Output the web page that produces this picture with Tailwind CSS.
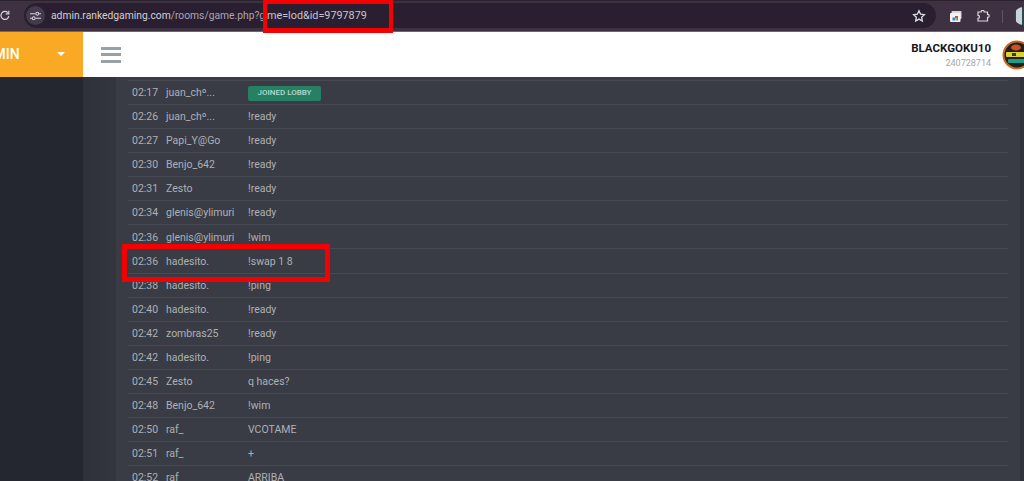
<!DOCTYPE html>
<html>
<head>
<meta charset="utf-8">
<script src="https://cdn.jsdelivr.net/npm/@tailwindcss/browser@4"></script>
</head>
<body class="w-[1024px] h-[481px] overflow-hidden relative bg-[#3a3d46] font-['Roboto',sans-serif]">
<!-- browser bar -->
<div class="h-[32px] bg-[#3e3142] border-t border-t-[#2b2230] border-b border-b-[#6a6570] flex items-center relative">
  <svg class="absolute left-[0px] top-[9px]" width="10" height="11" viewBox="0 0 10 11" fill="none" stroke="#d8d4dc" stroke-width="1.2"><path d="M7.8 2.6 A4 4 0 1 0 8.9 6.2"/><path d="M8.8 0.8 V3.8 H5.8"/></svg>
  <div class="absolute left-[24px] top-[2px] w-[912px] h-[25px] bg-[#2a1f30] rounded-full flex items-center">
    <div class="ml-[2px] w-[19px] h-[19px] rounded-full bg-[#443a4d] flex items-center justify-center">
      <svg width="11" height="10" viewBox="0 0 12 10" fill="none" stroke="#d8d4dc" stroke-width="1.1"><path d="M0 2.5H6M10 2.5H12M0 7.5H2M6 7.5H12"/><circle cx="8" cy="2.5" r="1.6"/><circle cx="4" cy="7.5" r="1.6"/></svg>
    </div>
    <span class="ml-[6px] text-[10.3px] text-[#d3cfd6] whitespace-nowrap">admin.rankedgaming.com<span class="text-[#aca5b1]">/rooms/game.php?g</span></span>
  </div>
  <svg class="absolute left-[912px] top-[8px]" width="14" height="14" viewBox="0 0 24 24" fill="none" stroke="#e0dde3" stroke-width="2.2"><path d="M12 3l2.8 5.9 6.4.8-4.7 4.4 1.2 6.4L12 17.3l-5.7 3.2 1.2-6.4L2.8 9.7l6.4-.8z"/></svg>
  <svg class="absolute left-[950px] top-[10px]" width="12" height="11" viewBox="0 0 12 11"><rect x="1.5" y="0" width="10" height="8" rx="1" fill="#d8d5da"/><rect x="0" y="2" width="10.5" height="9" rx="1" fill="#f4f2f5"/><path d="M2.5 6.5h2.5v3H2.5z" fill="#3a7fd9"/><path d="M5 5h3v2H5z" fill="#d9483b"/><path d="M5 7h1.5v2.5H5z" fill="#e8b93a"/><path d="M6.5 7H8v2.5H6.5z" fill="#3f9f5f"/></svg>
  <svg class="absolute left-[977px] top-[9px]" width="13" height="12" viewBox="0 0 13 12" fill="none" stroke="#dcd9df" stroke-width="1.2"><path d="M1 2H4.2V1.8a1.5 1.5 0 0 1 3 0V2H10.5V4.4h.2a1.5 1.5 0 0 1 0 3h-.2V11H1V8.4a1.5 1.5 0 0 0 0-3z"/></svg>
  <div class="absolute left-[1002px] top-[9px] w-px h-[13px] bg-[#5d5463]"></div>
  <div class="absolute left-[1014px] top-[6px] w-[18px] h-[18px] rounded-full bg-[#2f4750] overflow-hidden"><div class="w-[6px] h-[18px] bg-[#c8d4d8] ml-[2px]"></div></div>
</div>
<!-- app header -->
<div class="h-[45px] flex bg-white">
  <div class="w-[83px] bg-[#faa925] text-white relative overflow-hidden">
    <span class="absolute left-[-25px] top-[13px] text-[14px] leading-[18px] font-medium whitespace-nowrap">ADMIN</span>
    <div class="absolute left-[57px] top-[20px] w-0 h-0 border-x-[4px] border-x-transparent border-t-[4px] border-t-white"></div>
  </div>
  <div class="flex-1 flex items-center justify-between">
    <div class="ml-[18px] w-[20px] flex flex-col gap-[3.5px]">
      <div class="h-[3px] bg-[#98a0a8]"></div>
      <div class="h-[3px] bg-[#98a0a8]"></div>
      <div class="h-[3px] bg-[#98a0a8]"></div>
    </div>
    <div class="flex items-center">
      <div class="text-right mr-[11px] pt-[1px]">
        <div class="text-[11.5px] leading-[14px] font-bold text-[#16181c]">BLACKGOKU10</div>
        <div class="text-[9px] leading-[12px] mt-[2px] text-[#a3a8ad]">240728714</div>
      </div>
      <svg class="mr-[-8px]" width="30" height="30" viewBox="0 0 30 30">
        <circle cx="15" cy="15" r="14.5" fill="#c8691c"/>
        <circle cx="15" cy="15" r="12.5" fill="#241f1c"/>
        <ellipse cx="14" cy="7.5" rx="5" ry="3" fill="#c9502a"/>
        <rect x="4" y="12" width="22" height="5" rx="1" fill="#d8d232"/>
        <rect x="10" y="13" width="4" height="3" fill="#3a3a20"/>
        <rect x="6" y="19" width="18" height="4" rx="1" fill="#1f9c8c"/>
      </svg>
    </div>
  </div>
</div>
<!-- body -->
<div class="flex h-[404px]">
  <div class="w-[83px] bg-[#24272f]"></div>
  <div class="w-[33px] bg-gradient-to-r from-[#2e3138] to-[#33363e]"></div>
  <div class="flex-1 bg-[#393c45] pl-[12px] pr-[12px] text-[10.5px] text-[#aeb0b5]">
    <div class="h-[4px] border-b border-[#474a53]"></div>
    <div class="flex items-center h-[24.07px] pt-[1px] border-b border-[#474a53]"><span class="w-[34px] pl-[4px] box-content">02:17</span><span class="w-[82px]">juan_chº...</span><span class="h-[15px] w-[73px] rounded-[2px] bg-[#268064] text-[#b9d8cc] text-[8px] font-medium flex items-center justify-center">JOINED LOBBY</span></div>
    <div class="flex items-center h-[24.07px] pt-[1px] border-b border-[#474a53]"><span class="w-[34px] pl-[4px] box-content">02:26</span><span class="w-[82px]">juan_chº...</span><span>!ready</span></div>
    <div class="flex items-center h-[24.07px] pt-[1px] border-b border-[#474a53]"><span class="w-[34px] pl-[4px] box-content">02:27</span><span class="w-[82px]">Papi_Y@Go</span><span>!ready</span></div>
    <div class="flex items-center h-[24.07px] pt-[1px] border-b border-[#474a53]"><span class="w-[34px] pl-[4px] box-content">02:30</span><span class="w-[82px]">Benjo_642</span><span>!ready</span></div>
    <div class="flex items-center h-[24.07px] pt-[1px] border-b border-[#474a53]"><span class="w-[34px] pl-[4px] box-content">02:31</span><span class="w-[82px]">Zesto</span><span>!ready</span></div>
    <div class="flex items-center h-[24.07px] pt-[1px] border-b border-[#474a53]"><span class="w-[34px] pl-[4px] box-content">02:34</span><span class="w-[82px]">glenis@ylimuri</span><span>!ready</span></div>
    <div class="flex items-center h-[24.07px] pt-[1px] border-b border-[#474a53]"><span class="w-[34px] pl-[4px] box-content">02:36</span><span class="w-[82px]">glenis@ylimuri</span><span>!wim</span></div>
    <div class="flex items-center h-[24.07px] pt-[1px] border-b border-[#474a53]"><span class="w-[34px] pl-[4px] box-content">02:36</span><span class="w-[82px]">hadesito.</span><span>!swap 1 8</span></div>
    <div class="flex items-center h-[24.07px] pt-[1px] border-b border-[#474a53]"><span class="w-[34px] pl-[4px] box-content">02:38</span><span class="w-[82px]">hadesito.</span><span>!ping</span></div>
    <div class="flex items-center h-[24.07px] pt-[1px] border-b border-[#474a53]"><span class="w-[34px] pl-[4px] box-content">02:40</span><span class="w-[82px]">hadesito.</span><span>!ready</span></div>
    <div class="flex items-center h-[24.07px] pt-[1px] border-b border-[#474a53]"><span class="w-[34px] pl-[4px] box-content">02:42</span><span class="w-[82px]">zombras25</span><span>!ready</span></div>
    <div class="flex items-center h-[24.07px] pt-[1px] border-b border-[#474a53]"><span class="w-[34px] pl-[4px] box-content">02:42</span><span class="w-[82px]">hadesito.</span><span>!ping</span></div>
    <div class="flex items-center h-[24.07px] pt-[1px] border-b border-[#474a53]"><span class="w-[34px] pl-[4px] box-content">02:45</span><span class="w-[82px]">Zesto</span><span>q haces?</span></div>
    <div class="flex items-center h-[24.07px] pt-[1px] border-b border-[#474a53]"><span class="w-[34px] pl-[4px] box-content">02:48</span><span class="w-[82px]">Benjo_642</span><span>!wim</span></div>
    <div class="flex items-center h-[24.07px] pt-[1px] border-b border-[#474a53]"><span class="w-[34px] pl-[4px] box-content">02:50</span><span class="w-[82px]">raf_</span><span>VCOTAME</span></div>
    <div class="flex items-center h-[24.07px] pt-[1px] border-b border-[#474a53]"><span class="w-[34px] pl-[4px] box-content">02:51</span><span class="w-[82px]">raf_</span><span>+</span></div>
    <div class="flex items-center h-[24.07px] pt-[1px] border-b border-[#474a53]"><span class="w-[34px] pl-[4px] box-content">02:52</span><span class="w-[82px]">raf_</span><span>ARRIBA</span></div>
  </div>
  <div class="w-[4px] bg-[#30333b]"></div>
</div>
<!-- red annotation boxes -->
<div class="absolute left-[263px] top-[0px] w-[130px] h-[33px] border-[4px] border-b-[5px] border-[#f40000] bg-[#2a1f30] flex items-center overflow-hidden"><span class="text-[10.8px] text-[#c9c4cd] whitespace-nowrap leading-[24px]">me=lod&amp;id=9797879</span></div>
<div class="absolute left-[122px] top-[244px] w-[208px] h-[38px] border-[5px] border-[#f40000]"></div>
</body>
</html>
